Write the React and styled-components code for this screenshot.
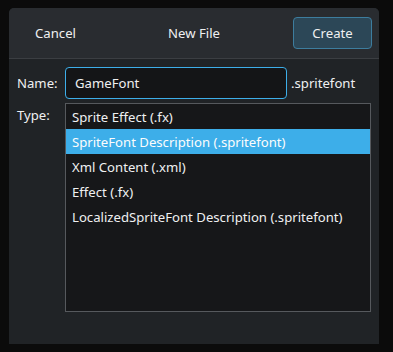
import React, { useState } from 'react'
import styled, { createGlobalStyle } from 'styled-components'

const GlobalStyle = createGlobalStyle`
  body {
    margin: 0;
    background: #0b0b0b;
    font-family: "Noto Sans", "Open Sans", sans-serif;
    font-size: 13.15px;
    color: #eff0f1;
  }
`

const Dialog = styled.div`
  margin: 8px 0 0 9px;
  width: 370px;
  height: 336px;
  background: #202326;
  border-radius: 5px 5px 0 0;
  display: flex;
  flex-direction: column;
  overflow: hidden;
`

const Header = styled.div`
  height: 50px;
  padding: 0 7px;
  background: #292c30;
  border-bottom: 1px solid #3b3e42;
  display: grid;
  grid-template-columns: 79px 1fr 79px;
  align-items: center;
`

const HeaderButton = styled.button`
  height: 32px;
  font: inherit;
  color: #eff0f1;
  border-radius: 4px;
  border: 1px solid ${p => (p.$primary ? '#3d7d9e' : 'transparent')};
  background: ${p => (p.$primary ? '#2c4757' : 'transparent')};
  cursor: pointer;
`

const Title = styled.div`
  text-align: center;
`

const Body = styled.div`
  padding: 8px 8px 0 8px;
  display: grid;
  grid-template-columns: 48px 1fr;
  row-gap: 4px;
`

const Label = styled.div`
  align-self: ${p => (p.$top ? 'start' : 'center')};
  padding-top: ${p => (p.$top ? '3px' : '0')};
`

const NameRow = styled.div`
  display: flex;
  align-items: center;
  gap: 4px;
`

const NameInput = styled.input`
  width: 222px;
  height: 32px;
  box-sizing: border-box;
  padding: 0 9px;
  font: inherit;
  color: #eff0f1;
  background: #141517;
  border: 1px solid #3daee9;
  border-radius: 4px;
  outline: none;
`

const Suffix = styled.span``

const List = styled.div`
  width: 306px;
  height: 209px;
  box-sizing: border-box;
  background: #161719;
  border: 1px solid #56595d;
  display: flex;
  flex-direction: column;
`

const Item = styled.div`
  height: 25px;
  line-height: 26px;
  padding: 0 6px;
  background: ${p => (p.$selected ? '#3daee9' : 'transparent')};
  color: ${p => (p.$selected ? '#fcfcfc' : '#eff0f1')};
  cursor: default;
`

const types = [
  'Sprite Effect (.fx)',
  'SpriteFont Description (.spritefont)',
  'Xml Content (.xml)',
  'Effect (.fx)',
  'LocalizedSpriteFont Description (.spritefont)',
]

const App = () => {
  const [name, setName] = useState('GameFont')
  const [selected, setSelected] = useState(1)

  return (
    <>
      <GlobalStyle />
      <Dialog>
        <Header>
          <HeaderButton>Cancel</HeaderButton>
          <Title>New File</Title>
          <HeaderButton $primary>Create</HeaderButton>
        </Header>
        <Body>
          <Label>Name:</Label>
          <NameRow>
            <NameInput value={name} onChange={e => setName(e.target.value)} />
            <Suffix>.spritefont</Suffix>
          </NameRow>
          <Label $top>Type:</Label>
          <List>
            {types.map((t, i) => (
              <Item key={t} $selected={i === selected} onClick={() => setSelected(i)}>
                {t}
              </Item>
            ))}
          </List>
        </Body>
      </Dialog>
    </>
  )
}

export default App
